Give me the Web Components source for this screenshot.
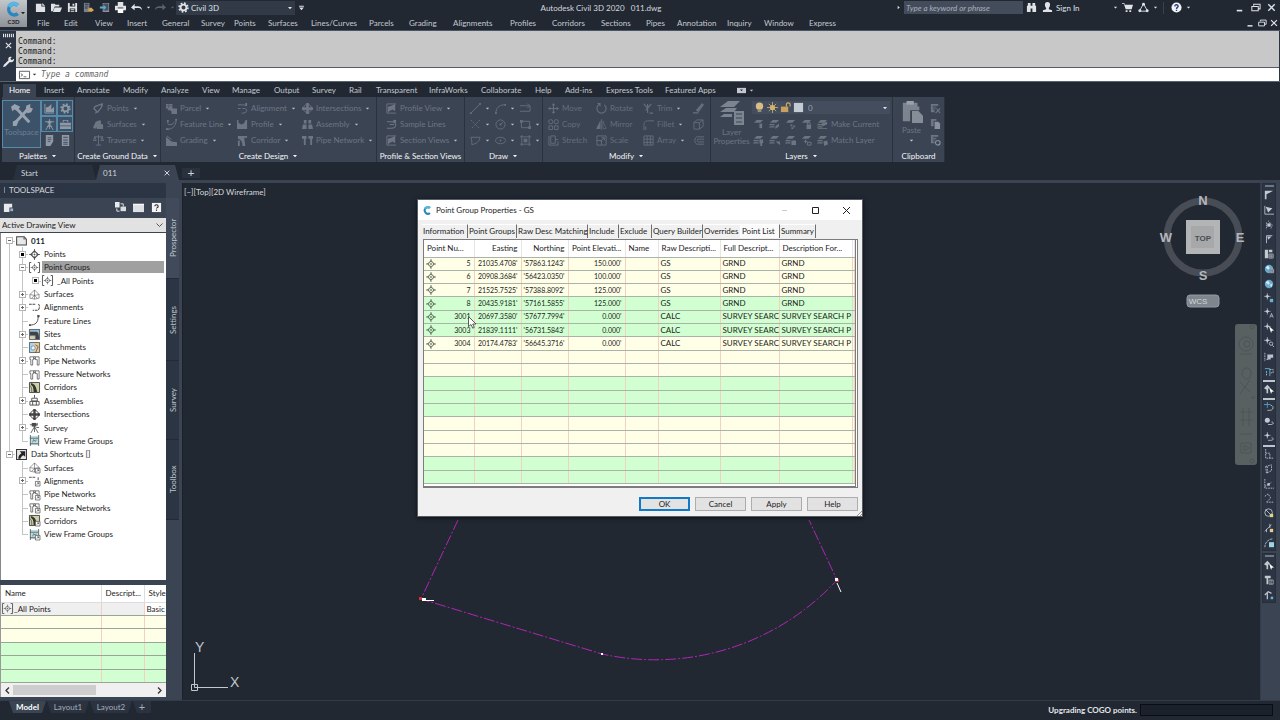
<!DOCTYPE html>
<html lang="en">
<head>
<meta charset="utf-8">
<title>Autodesk Civil 3D 2020 - 011.dwg</title>
<style>
  :root{
    --dark:#212832; --mid:#2c3543; --panel:#3b4453; --text:#c9ced6; --dim:#6d7583;
    --cream:#ffffe8; --green:#d1ffd1; --ui:Lato,"Open Sans","Noto Sans",sans-serif;
  }
  body{margin:0;height:100vh;display:flex;flex-direction:column;overflow:hidden;
    background:var(--dark);color:var(--text);font:8px/12px var(--ui)}
  cad-workspace{flex:1;min-height:0}
</style>
</head>
<body>
<cad-header></cad-header>
<cad-command></cad-command>
<cad-ribbon></cad-ribbon>
<cad-doctabs></cad-doctabs>
<cad-workspace>
  <cad-toolspace slot="left"></cad-toolspace>
  <cad-canvas></cad-canvas>
  <cad-toolstrip slot="right"></cad-toolstrip>
</cad-workspace>
<cad-status></cad-status>

<script>
const S = (d, w = 1) => `<path d="${d}" fill="none" stroke="currentColor" stroke-width="${w}"/>`;
const F = (d, c = 'currentColor') => `<path d="${d}" fill="${c}"/>`;
const cut = '<path d="M7 7h5v5H7z" fill="#fff" stroke="#555" stroke-width=".8"/><path d="M8.5 10.500l2-2M9 8.500h1.500v1.500" fill="none" stroke="#333" stroke-width=".7"/>';
const pipe = S('M1 2h4v3H4v6H2V5H1zM7 2h4v9H9V5H7z', .8) + S('M5 2h2M5 4h2');
const surf = S('M1 10V6l5-5 5 5v4L6 11zM1 6l5 1 5-1M6 1v10M3 10l3-3 3 3', .6);
const corr = '<path d="M.5.5h11v11H.5z" fill="#cfcfa8" stroke="#444"/>' + F('M2 1c5 1 6 5 7 10H5C5 6 4 4 2 3z', '#33382c') + S('M1 4c2 1 2 4 2 7', .8);
const frame = '<path d="M1 1h10v10H1z" fill="#b9dfe3"/>' + S('M1.500 0v12M10.500 0v12M1 3.500h9M1 9.500h9', .8) + S('M4 8l1-3 2 2 1-2', .7);
const diam = '<path d="M6 2l4 4-4 4-4-4z" fill="none" stroke="currentColor" stroke-width="1.200"/>' + S('M6 0v4M6 8v4M0 6h4M8 6h4M6 5v2M5 6h2', .9);
const star = S('M4 0v8M0 4h8', .7) + F('M4 1.500L5 3l1.500 1L5 5 4 6.500 3 5 1.500 4 3 3z');
const lay = F('M4 1h7L8 4H1z') ;
const layers = lay + F('M1 5.500h5v1.200H0zM1 8h5v1.200H0z');
const globe = '<circle cx="6" cy="6" r="5" fill="#66a9cc"/><path d="M2 4l3-2 2 3-2 2zM7 7l3-1-1 4z" fill="#d7eef8"/>';
const ICONS = {
  logo: '<path d="M9.500 2.500A4.600 4.600 0 1 0 9.500 9.500L7.800 7.800A2.300 2.300 0 1 1 7.800 4.200z" fill="#2a87bd"/><path d="M9.500 2.500L7.800 4.200A2.300 2.300 0 0 0 4 5L2 3.500a4.600 4.600 0 0 1 7.500-1z" fill="#59b6e4"/>',
  new: F('M1 2h6v3h4v6H1z') + F('M8 1l3 3H8z'),
  open: F('M0 10V2h4l1 1h4v2H4L2 10z') + F('M4 6h8l-2 5H2z'),
  save: F('M1 1h10v10H1zM3 1v4h6V1zM3 7v4h6V7z').replace('<path', '<path fill-rule="evenodd"') + F('M4 8h4v1H4zM4 9.700h4v1H4zM6 2h2v2H6z'),
  saveas: F('M1 1h6v10H1z', '#7b828c') + F('M2 2h4v1H2zM2 4h4v1H2zM2 6h3v1H2z', '#2c3543') + F('M6 7l3-1 3 3-3 2-3-1z', '#d7a94b'),
  phone: F('M4 1h7v10H4zM5 2v7h5V2z', '#8b93a0').replace('<path', '<path fill-rule="evenodd"') + F('M5 2h5v7H5z', '#49515e') + F('M1 5h4V3l3 3-3 3V7H1z', '#5fa9da'),
  print: F('M3 0h6v4H3zM0 4h12v5H0z') + F('M3 7h6v5H3z', '#fff') + F('M3 6h6v1H3z', '#333'),
  undo: F('M0 6l4-4v2.500h3c3 0 5 1 5 4.500-1-2-2-2.500-5-2.500H4V9z'),
  redo: F('M12 6L8 2v2.500H5C2 4.500 0 5.500 0 9c1-2 2-2.500 5-2.500h3V9z'),
  gear: '<circle cx="6" cy="6" r="3.200" fill="none" stroke="currentColor" stroke-width="2"/><circle cx="6" cy="6" r="4.800" fill="none" stroke="currentColor" stroke-width="1.800" stroke-dasharray="1.900 1.870"/>',
  down: F('M2 4h8L6 8.500z'), right: F('M4 2v8l5-4z'),
  combo: F('M2 3h8v1.500H2zM2 6h8l-4 4.500z'),
  bino: F('M1 4h1V1h3v3h2V1h3v3h1v7H7V7H5v4H1z'),
  user: F('M6 0c4 0 3 5 1.500 6.500V8L11 9v2H1V9l3.500-1V6.500C3 5 2 0 6 0z'),
  cart: F('M0 1h2.500L3 3h9l-1.500 5H4L2 2H0zM4 9h2v2H4zM8 9h2v2H8z'),
  tri: '<path d="M6 2l4.500 8h-9z" fill="none" stroke="currentColor"/><circle cx="6" cy="2.500" r="1.600" fill="currentColor"/><circle cx="2" cy="9.500" r="1.600" fill="currentColor"/><circle cx="10" cy="9.500" r="1.600" fill="currentColor"/>',
  help: '<circle cx="6" cy="6" r="5.500" fill="#f2f4f8"/><path d="M4.200 4.800c0-2.600 3.800-2.300 3.600-.1C7.700 5.800 6 6 6 7.500M6 8.500v1.400" fill="none" stroke="#23407c" stroke-width="1.500"/>',
  min: F('M3 8.500h6v1.800H3z'),
  restore: S('M4 4V2.500h7v5H9M2 5h7v4.500H2z', 1.100),
  close: S('M2.500 2.500l7 7M9.500 2.500l-7 7', 1.500),
  wrench: F('M12 3L9.500 4.500 8 3l1.500-2C7 0 5 2 6 4.500L1 9.500 0 12l2.500-.5L7.500 6.500C10 7.500 12.500 5.500 12 3z'),
  grip: F('M0 4h1.200v4H0zM2.200 4h1.200v4H2.200zM4.400 4h1.200v4H4.400zM6.600 4h1.200v4H6.600zM8.800 4H10v4H8.800zM11 4h1v4h-1z'),
  cmd: '<path d="M.5 2.500h11v8H.5z" fill="#fff" stroke="#555"/><path d="M2 5l2 1.500L2 8M5 8.500h3" fill="none" stroke="#333" stroke-width=".8"/>',
  tools: S('M2 10.500L9 3M3.500 3L10 10', 1.600) + F('M0 1.500L2 0l3 1.500L3.500 3.800 1.800 3 .7 4z') + F('M8 3.800L8.300 1 10.500 0v2L12 2.500l-1 2L9 5zM1 9.500l2-.8 1 1L3 12H1z'),
  prof1: S('M1 1v10h10') + F('M2 5l3-1 3-3v6l3-3v6H2z'),
  survey: S('M1 3h10M6 0v5M6 5L2 12M6 5l4 7M6 4v7M3 8h6', 1) + F('M4 2h4v3H4z'),
  brief: F('M0 4h12v3H0zM0 8h12v3H0zM3 1h6v2.500H8V2H4v1.500H3z'),
  sheet: F('M2 0h8v7L7 12H2z') + S('M4 3h4M4 5h4M4 7h3', .8).replaceAll('currentColor', '#3b4453'),
  calc: F('M2 0h8v12H2z') + S('M3.500 2.500h5M3.500 5.500h5M3.500 8h5M3.500 10h5', 1).replaceAll('currentColor', '#3b4453'),
  tag: S('M2 4l5-2 3-1-1 4-4 5-4-4z', 1.400) + F('M8 2l3-1-1 3zM3 9l-1 3 3-2z'),
  surfaces: F('M0 9l3-6 5-2 1 3-3 3-4 4zM4 8l4-3 3 1v5H4z'),
  scales: S('M1 2h10M6 0v11M3 11h6M2 2L.5 6h3zM10 2L8.500 6h3z', .9),
  parcel: F('M0 1h7v5h-2v2H2V6H0zM5 6h7v6H6V9H5z') + S('M3 1v5M0 3h7', .5).replaceAll('currentColor', '#3b4453'),
  featureline: S('M2 2v3c0 2 6 2 7-2M3 11c4 0 8-4 8-9', 1) + F('M1 1h2v2H1zM10 0h2v2h-2zM0 10h3v2H0z'),
  grading: F('M0 2l6 5 6 1v4H0z') + S('M1 1l5 4', 1),
  alignment: S('M1 2h6l4 1M1 6h3M6 6h2c4 0 3 5-1 5H5', 1) + F('M9 0h2v3H9z'),
  profile: F('M0 1h1.500v3l3 2 3-1 2-4H11v10H0z'),
  corridor: F('M1 1h10v2H8c0 4 1 6 1 9H6C6 8 5 5 1 4z') + F('M1 6h2v6H1z'),
  inter: '<circle cx="6" cy="6" r="4.500" fill="none" stroke="currentColor"/>' + F('M4.500 0h3v4.500H12v3H7.500V12h-3V7.500H0v-3h4.500z'),
  assembly: F('M2 1h3v4H2zM7 1h3v4H7zM1 6h4v5H0zM7 6h4l1 5H7z'),
  pipe: F('M0 1h5v3H4v7H2V4H0zM7 1h5v3h-1v7H9V4H7z'),
  pview: S('M1 1h10M1 11h10M1 1v10') + F('M2 4l4-1 4-2v8l-3-2-5 3z'),
  sline: S('M1 3h6c5 0 5 7-1 7H1M4 6h5', 1.100) + F('M8 1h3v3H8z'),
  line: S('M1 11L11 1') + F('M0 10h2v2H0zM10 0h2v2h-2z'), arc: S('M1 11C1 6 4 2 10 2') + F('M0 10h2v2H0zM10 1h2v2h-2z'),
  pline: S('M0 3h9M0 9h11M8 1l3 2-3 2M11 3v6'), rays: S('M1 1l10 10M11 1L1 11', 1).replace('/>', ' stroke-dasharray="2 1.500"/>'),
  circle: '<circle cx="6" cy="6" r="5" fill="none" stroke="currentColor"/>' + S('M6 6l3-3') + F('M5 5h2v2H5z'),
  rect: S('M1.500 2.500h9v7h-9z') + F('M0 1h3v3H0zM9 8h3v3H9z'), hatch: S('M2 10.500c0-3 0-5-1-8h10c-1 5-4 7-9 8z'),
  ell: '<ellipse cx="6" cy="6" rx="5.500" ry="3.500" fill="none" stroke="currentColor"/><circle cx="6" cy="6" r="1" fill="currentColor"/>',
  region: S('M2 0v12M10 0v12M0 2h12M0 10h12') + F('M4 4h4v4H4z'),
  move: S('M6 1v10M1 6h10', 1.200) + F('M6 0l2 2.500H4zM6 12l2-2.500H4zM0 6l2.500-2v4zM12 6L9.500 4v4z'),
  rotate: S('M3 2a5 5 0 1 0 6 0', 1.200) + F('M1 0h4v4z'),
  copy: '<circle cx="3" cy="3" r="2.300" fill="none" stroke="currentColor"/><circle cx="9" cy="3" r="2.300" fill="none" stroke="currentColor"/>' + S('M1 7.500h4v4H1zM7 7.500h4v4H7z'),
  mirror: F('M5 1v10H0z') + S('M7.500 2v8.500h3.500zM6 0v12', .7), stretch: S('M1 1v10h10V7M3 1h5v8H3zM8 5h3', 1),
  scale: S('M1 1h10v10H1zM1 6h5v5M5 7l4-4M6 3h3v3'), trim: S('M1 1l4 5M5 1v10M3 8l6-7M7 11h4', 1.300),
  fillet: S('M1 12V7c0-4 2-5 5-5h6M3 12V8'), array: S('M1 1h10v10H1zM1 4.500h10M1 8h10M4.500 1v10M8 1v10'),
  erase: F('M3 8l7-8 2 2-6 8z') + F('M0 10h6v1.500H0z'), explode: S('M1 4h6v7H1zM1 4l3-3h7v7l-4 3M7 4l4-3'), offset: S('M12 2H5C1 2 1 10 5 10h7M12 4.500H6c-2 0-2 3 0 3h6'),
  layerprop: F('M4 0h6L7 3H0zM3 3.500h5.500L7 5.500H0zM2 6.500h4v1.500H0z') + F('M7 5h5v7H7z') + S('M8 6.500h3M8 8.500h3M8 10.500h3', .6).replaceAll('currentColor', '#3b4453'),
  bulb: '<circle cx="6" cy="4.500" r="4" fill="#d9bd86"/><path d="M4 8h4v3H4z" fill="#9c8d6c"/>',
  sun: '<circle cx="6" cy="6" r="2.800" fill="#d9b668"/>' + S('M6 0v12M0 6h12M2 2l8 8M10 2l-8 8', .9).replaceAll('currentColor', '#d0b070'),
  lock: F('M1 5h8v6H1z', '#c9a15c') + S('M7 5V2.500c0-2 4-2 4 0V5', 1.200).replaceAll('currentColor', '#d0b070'),
  swatch: F('M1 1h10v10H1z', '#c3cbd5'),
  l1: lay + F('M7 5h3v5H7z'), l2: layers + F('M7 8l4-3v3l-4 3z'), l3: lay + F('M6 6h2v2H6zM9 7h2v2H9zM7 9h2v2H7z'), l4: lay + F('M6 6h5v5H6z') + S('M7 6V4h3v2'), l5: layers + F('M5 5l6-2v3L6 8zM1 10h10v1H1z'),
  l6: layers + F('M7 5h4v4H7zM8 9h2v3H8z'), l7: layers + F('M7 7l5 4v-4z'), l8: layers + F('M7 6h5v5H7z'), l9: lay + S('M3 7h4M5 5v4M7 8h4v3H7z'), l10: layers + F('M7 7l4-1 1 4-4 2z'),
  paste: F('M1 1h8v2h1v2H5v6H1z') + F('M3 0h4v2H3z', '#9aa1ab') + F('M6 5.500h3.500L12 8v4H6z', '#858d99'),
  c1: F('M1 1h8v2H3v1h4v1H3v1h3v1H3v1h2v2H1z') + S('M6 11l5-5M7 6l4 5', 1.200), c2: F('M1 0h6v2H4v6H1z') + F('M5 3h4l2 2v6H5z', '#8a919d'), c3: F('M1 0h8v2H3v1h4v1H3v1h3v1H3v1h2v2H1z') + '<circle cx="8.500" cy="8.500" r="2.500" fill="none" stroke="#8a919d" stroke-width="1.200"/>',
  panelist: F('M0 2.500h12v7H0z') + F('M4 4.500h4L6 7z', '#212832'),
  doc: '<path d="M.7 2h6.600v0H9l2.300 2.500V11H.7z" fill="#e8e8e8" stroke="#444" stroke-width="1.100"/><path d="M8 2l3 3H8z" fill="#777"/>',
  pt: diam, ptgrp: S('M2.500.5H.5v11h2M9.500.5h2v11h-2', 1) + `<g transform="translate(1.800 1.800) scale(.7)">${diam}</g>`,
  tsurf: surf, talign: S('M0 2.500h7M10 2.500c2 0 2 6-1 6.500H4', 1.100).replace('/>', ' stroke-dasharray="3 .8"/>'), tfl: S('M1 11c6 0 9-3 9-9') + F('M9 0h2.500v2.500H9zM0 10h2v2H0z'),
  tsite: '<path d="M0 0h12v12H0z" fill="#8fbde0"/>' + F('M1 3h6c3 0 4 2 4 8H7V7H1z', '#45413c') + F('M0 8h6v4H0z', '#d9cda8') + S('M.5.5h11v11H.5z', .8),
  tcatch: '<path d="M0 0h12v12H0z" fill="#e8c79b"/><path d="M0 0h6l-2 5 2 3-3 4H0z" fill="#a9d5ec"/><circle cx="4.500" cy="6.500" r="2.300" fill="#e8f5fb" stroke="#3d7fa3" stroke-width=".7"/>' + S('M7 3l3 2-3 7M.5.5h11v11H.5z', .8),
  tpipe: pipe, tcorr: corr, tasm: S('M6 0v3M3 3.500h6v3H3zM1 7h10v4H1zM4 7v4M8 7v4', 1), tinter: '<circle cx="6" cy="6" r="4.500" fill="none" stroke="#333"/>' + F('M4.700 0h2.600v4.700H12v2.600H7.300V12H4.700V7.300H0V4.700h4.700z', '#444'),
  tsurvey: S('M1 3h8M9 1v3M6 5L2 12M6 5l4 7M6 4v7M8 6h3', .9) + F('M3 1h5v4H3z'), tframe: frame,
  tshort: '<path d="M.6.6h10.800v10.800H.6z" fill="#e6e6e6" stroke="#333" stroke-width="1.100"/>' + F('M4 2.500h6v6L8 6.700C6 8 5 9 5 10.500H2.500C2.500 7.500 4 6 6 4.700z', '#222'),
  ssurf: surf + cut, salign: S('M0 2.500h7M10 2.500v3').replace('/>', ' stroke-dasharray="3 .8"/>') + cut, spipe: pipe + cut, scorr: corr + cut, sframe: frame + cut,
  tb1: F('M1 2h9v4H7v5H1z') + F('M8 7h3v3H8z', '#9fb6cc'), tb2: F('M0 0h5v6H0z') + F('M6 5h6v5H6z', '#d9dde2') + S('M6 2h3v3M2 7v3h3'), tb3: F('M0 2h12v9H0z', '#dcdfe4') + F('M0 2h12v1.500H0z', '#f6f6f6'), tb4: F('M1 1h10v10H1z', '#f4f4f4') + S('M4.200 4.500c0-2 3.600-2 3.600 0S6 5.800 6 7.200M6 8.300v1.200', 1.200).replaceAll('currentColor', '#222'),
  r1: F('M1 1h10L3 5v6H1z'), r2: S('M1 1v10h11') + F('M2 2l8 2-5 5z'), r3: S('M5 1l5 5-2 5M3 3v8', 1).replace('/>', ' stroke-dasharray="1.500 1"/>') + F('M4 4h4v4H4z'), r4: S('M3 11V2h7', 1) + F('M4 3h5L5 7z'),
  r5: F('M1 1h4v10H1zM6 1h4v3H6z') + S('M6 6h5v5H6zM8.500 6v5M6 8.500h5', .8), r6: globe + F('M7 6h5v6H7z', '#2c3543') + S('M7.500 6.500h4v4h-4zM9.500 6.500v4M7.500 8.500h4', .8), r7: globe + S('M2 7l4-4M5 9l4-4', .8),
  r8: star + F('M7 7h4v4H7z', '#67b0d6'), r9: star + S('M7 11.500l2-5 2 5M7.800 9.800h2.400', .9), r10: star + F('M6 4l6 5-2.500.3L8.500 12z', '#fff'), r11: star + '<circle cx="8.500" cy="8" r="2" fill="none" stroke="currentColor"/>' + S('M10 10l2 2'),
  r12: S('M1 1v10M3 9h3', 1).replace('/>', ' stroke-dasharray="2 1"/>') + F('M4 3h7v4H8v2H4z', '#b9c2cc'), r13: S('M1 2h6v9', 1.200).replaceAll('currentColor', '#5aa5d2') + S('M7 3h4v4H8M3 5v5', 1).replace('/>', ' stroke-dasharray="2 1"/>'),
  r14: F('M0 5l4-4 3 3-2 2v5H3V7z') + F('M6 4l6 5-2.500.3L8.500 12z', '#fff'), r15: S('M0 3h8M4 0v7', 1).replaceAll('currentColor', '#5aa5d2') + S('M8 4c4 0 4 6-1 6H4', 1),
  r16: '<circle cx="4" cy="4" r="3" fill="currentColor"/>' + S('M5 9h3c4 0 4-3 1-3', 1.100), r17: star + S('M5 10h3c4 0 4-3 1-3', 1), r18: S('M2 0v11h10M2 5h5v6', 1).replace('/>', ' stroke-dasharray="2 1"/>'),
  r19: S('M2 3l7-2v7l-6 3zM4 3v8', 1).replace('/>', ' stroke-dasharray="2 1"/>'), r20: S('M1 0v11h11M1 9l8-5', 1).replace('/>', ' stroke-dasharray="2 1"/>') + F('M4 5h3v3H4z'), r21: S('M1 4l4-3 3 5-5 5h9', 1).replace('/>', ' stroke-dasharray="2 1"/>'),
  r22: '<circle cx="5.500" cy="5.500" r="4.500" fill="none" stroke="currentColor"/>' + S('M2 2l7 7') + F('M7 7h4v4H7z', '#e2d38d'), r23: S('M1 10l8-8M7 1v5M3 7v4') + F('M7 7h4v4H7z', '#e2c98d'), r24: S('M1 11C1 6 4 2 10 1', 1).replace('/>', ' stroke-dasharray="3 1"/>') + F('M6 5h6v6H6z', '#9cd3e6'),
  r25: F('M1 1h7v3H1zM3 4h2v7H3z') + S('M6 6h5v5H6zM8.500 6v5', .8), r26: S('M1 6l4-4 4 2M4 4v7', 1.500) + F('M8 8h3v3H8z', '#67b0d6')
};

/* Base: each element gets an open shadow root from its css() and html(). */
class CadElement extends HTMLElement {
  connectedCallback() {
    if (this.shadowRoot) return;
    const t = document.createElement('template');
    t.innerHTML = `<style>:host{box-sizing:border-box;display:block}*,*::before,*::after{box-sizing:border-box}
      button,input,select{font:inherit;color:inherit;background:none;border:0;padding:0;margin:0;text-align:left;white-space:nowrap;border-radius:0}
      select{appearance:none}ul{list-style:none;margin:0;padding:0}${this.css()}</style>${this.html()}`;
    this.attachShadow({ mode: 'open' }).append(t.content.cloneNode(true));
  }
  css() { return ''; }
  html() { return '<slot></slot>'; }
}
const ic = (n, s = '', label = '') => `<cad-icon name="${n}" ${s ? `class="${s}"` : ''} ${label ? `role="img" aria-label="${label}"` : 'aria-hidden="true"'}></cad-icon>`;
const ib = (n, label, s = '') => `<button ${s ? `class="${s}"` : ''} aria-label="${label}">${ic(n)}</button>`;

customElements.define('cad-icon', class extends CadElement {
  css() { return ':host{display:inline-block;flex:none;width:var(--s,11px);height:var(--s,11px)}svg{display:block;width:100%;height:100%;overflow:visible}'; }
  html() { return `<svg viewBox="0 0 12 12">${ICONS[this.getAttribute('name')] || ''}</svg>`; }
});

customElements.define('cad-header', class extends CadElement {
  css() { return `
    :host{display:grid;grid-template-columns:32px 1fr;height:31px;background:var(--dark);border-bottom:1px solid #4a5566}
    .app{width:27px;height:27px;background:linear-gradient(#c3c6ca,#8d9299);display:grid;grid-template-rows:18px 9px;justify-items:center;position:relative}
    .app cad-icon{--s:19px}.app b{font:bold 6px/8px var(--ui);color:#222}
    .app .d{--s:6px;position:absolute;right:1px;top:10px;color:#222}
    .bar{display:grid;grid-template-columns:auto 1fr auto;height:15px;align-items:center;padding-right:1px}
    .l,.r,.win{display:flex;align-items:center}
    button{display:flex;width:16px;height:14px;align-items:center;justify-content:center;color:#dfe2e6}
    .a{width:8px;--s:5px}.faded{color:#59616d}
    .ws{display:flex;align-items:center;width:119px;height:14px;background:#323a48;padding:0 2px;color:#dfe3e8}
    .ws select{flex:1;margin-left:2px;line-height:12px}.ws .d{--s:6px}
    .l .c{--s:7px;margin-left:2px}
    h1{font:8px/14px var(--ui);margin:0;text-align:center;white-space:pre;color:#d5d9de;padding-left:3px}
    input{width:119px;height:13px;background:#434c5b;font-style:italic;padding:0 2px;margin-left:2px}
    input::placeholder{color:#aab1bb;opacity:1}
    .sign{width:56px;color:#dfe2e6;justify-content:flex-start;padding-left:1px}.sep{width:1px;height:12px;background:#39414e;margin:0 4px}
    .gap{margin-left:39px}
    nav{display:flex;height:15px;padding-top:1px;justify-content:space-between}
    nav ul{display:grid;grid-template-columns:27px 31px 32px 35px 39px 33px 34px 43px 58px 40px 44px 57px 42px 49px 45px 31px 50px 37px 45px 40px;padding-left:5px}
    nav li button{width:auto;justify-content:flex-start;color:#c3c8d0;line-height:14px}
    .win button{width:12px;--s:10px}`; }
  html() {
    const menus = 'File Edit View Insert General Survey Points Surfaces Lines/Curves Parcels Grading Alignments Profiles Corridors Sections Pipes Annotation Inquiry Window Express'.split(' ');
    return `<div class="app">${ic('logo')}<b>C3D</b>${ic('down', 'd')}</div>
    <div><div class="bar"><div class="l">${ib('new', 'New')}${ib('open', 'Open')}${ib('save', 'Save')}${ib('saveas', 'Save as')}${ib('phone', 'Web and mobile')}${ib('print', 'Plot')}${ib('undo', 'Undo')}${ib('down', 'Undo list', 'a')}${ib('redo', 'Redo', 'faded')}${ib('down', 'Redo list', 'a faded')}
      <label class="ws">${ic('gear')}<select aria-label="Workspace"><option>Civil 3D</option></select>${ic('down', 'd')}</label>${ib('combo', 'Customize', 'a c')}</div>
      <h1>Autodesk Civil 3D 2020   011.dwg</h1>
      <div class="r">${ib('right', 'Search options', 'a')}<input type="search" aria-label="Search help" placeholder="Type a keyword or phrase">${ib('bino', 'Search')}${ib('user', 'Account')}<button class="sign">Sign In</button>${ib('down', 'Account list', 'a')}${ib('cart', 'App store')}${ib('tri', 'Autodesk app')}${ib('down', 'App list', 'a')}<span class="sep"></span>${ib('help', 'Help')}${ib('down', 'Help list', 'a')}${ib('min', 'Minimize', 'gap')}${ib('restore', 'Restore')}${ib('close', 'Close')}</div></div>
    <nav><ul>${menus.map(m => `<li><button>${m}</button></li>`).join('')}</ul><div class="win">${ib('min', 'Minimize drawing')}${ib('restore', 'Restore drawing')}${ib('close', 'Close drawing')}</div></nav></div>`;
  }
});

customElements.define('cad-command', class extends CadElement {
  css() { return `
    :host{display:grid;grid-template-columns:16px 1fr;height:51px;background:var(--mid);border-bottom:1px solid #5a6370;padding-right:1px}
    .g{display:grid;grid-template-rows:9px 10px 22px;place-items:center;align-content:start;color:#e6e8ea}
    .g .x{--s:9px}
    .log{background:#c8c8c8;height:37px;padding:6px 2px 0;color:#222;font:8px/10px "DejaVu Sans Mono","Liberation Mono",monospace;border-bottom:1px solid #555b63}
    .log p{margin:0}
    label{display:flex;align-items:center;background:#fff;height:13px;padding-left:3px;color:#333}
    .d{--s:5px;margin:0 2px}
    input{flex:1;font:italic 8px/12px "DejaVu Sans Mono","Liberation Mono",monospace;margin-left:2px}
    input::placeholder{color:#666;opacity:1}`; }
  html() { return `<div class="g">${ic('grip')}${ic('close', 'x')}${ic('wrench')}</div><div><div class="log"><p>Command:</p><p>Command:</p><p>Command:</p></div>
    <label>${ic('cmd')}${ic('down', 'd')}<input aria-label="Command" placeholder="Type a command"></label></div>`; }
});

/* A ribbon command: icon, slotted label, optional drop-down arrow. */
customElements.define('rb-cmd', class extends CadElement {
  css() { return `:host{height:16px;color:var(--dim)}button{display:flex;align-items:center;height:16px}.t{padding-left:3px}.d{--s:5px;margin-left:4px;color:#b9bec6}`; }
  html() { return `<button aria-label="${this.textContent || this.getAttribute('icon')}">${ic(this.getAttribute('icon'))}${this.textContent ? '<span class="t"><slot></slot></span>' : ''}${this.hasAttribute('menu') ? ic('down', 'd') : ''}</button>`; }
});
customElements.define('rb-panel', class extends CadElement {
  css() { return `:host{display:grid;grid-template-rows:52px 13px;background:var(--panel);border-right:1px solid #2a323f;height:65px}
    .b{padding-top:3px;min-width:0}h2{font:8px/12px var(--ui);margin:0;color:#f4f5f7;display:flex;justify-content:center;align-items:center;gap:4px;white-space:nowrap;--s:6px}`; }
  html() { return `<div class="b"><slot></slot></div><h2>${this.getAttribute('label')}${this.hasAttribute('menu') ? ic('down') : ''}</h2>`; }
});
const cmd = (i, t = '', m = '') => `<rb-cmd icon="${i}" ${m ? 'menu' : ''}>${t}</rb-cmd>`;
customElements.define('cad-ribbon', class extends CadElement {
  css() { return `
    :host{padding-top:2px;height:83px}
    .tabs{display:grid;grid-template-columns:35px 33px 46px 38px 41px 30px 42px 38px 37px 27px 53px 52px 54px 30px 41px 59px 72px 20px;padding-left:3px;height:13px}
    .tabs button{display:flex;align-items:center;gap:3px;line-height:13px;height:13px;padding-left:6px;color:#c3c8d0}
    .tabs button[aria-selected=true]{background:var(--panel);color:#fff;width:33px}
    .tabs .d{--s:5px}.tabs .w{--s:9px}
    .p{display:flex;margin-left:2px}
    rb-panel{flex:none}
    .pal{width:73px}.gd{width:86px}.de{width:216px}.pr{width:88px}.dr{width:78px}.mo{width:168px}.la{width:182px}.cl{width:52px}
    .dr,.mo{--dim:#666e7b}
    .pg{display:grid;grid-template-columns:39px 16px 16px;grid-template-rows:repeat(3,16px)}
    .pg button{display:grid;place-items:center;color:#8f99a6}
    .pg .on{background:#3b5269;border:1px solid #568aa8}
    .pg .big{grid-row:1/4;align-content:start;padding-top:3px;gap:2px;color:#98a2af;--s:22px}
    .pg .big span{color:#6f7e8f}
    .col{display:grid;grid-auto-flow:column;grid-template-rows:repeat(3,16px);justify-content:start}
    .gd .col{padding-left:18px}.de .col{padding-left:5px;grid-template-columns:71px 65px 80px}
    .pr .col{padding-left:9px}.dr .col{padding-left:5px;grid-template-columns:25px 25px 25px}
    .mo .col{padding-left:5px;grid-template-columns:48px 47px 50px 14px}
    .lg{display:grid;grid-template-columns:41px 1fr;}
    .big{display:grid;justify-items:center;align-content:start;color:#7c8490;line-height:9px;text-align:center;--s:24px;padding-top:1px;gap:3px}
    .big span{color:var(--dim)}
    .sel{display:flex;align-items:center;height:13px;background:#434d5e;gap:2px;padding-left:2px;width:138px;margin-bottom:2px;margin-top:1px}
    .sel select{flex:1;padding-left:2px;color:#9aa2ad}.sel .d{--s:6px;margin-right:2px;color:#dfe3e8}
    .row{display:grid;grid-template-columns:repeat(5,16px);padding-left:1px}
    .cg{display:grid;grid-template-columns:37px 14px}.cl .big{--s:22px}.cl .big .d{--s:5px;color:#c9ced6}`; }
  html() {
    const tabs = ['Home', 'Insert', 'Annotate', 'Modify', 'Analyze', 'View', 'Manage', 'Output', 'Survey', 'Rail', 'Transparent', 'InfraWorks', 'Collaborate', 'Help', 'Add-ins', 'Express Tools', 'Featured Apps'];
    return `<div class="tabs" role="tablist">${tabs.map((t, i) => `<button role="tab" aria-selected="${!i}">${t}</button>`).join('')}<button aria-label="Ribbon display">${ic('panelist', 'w')}${ic('down', 'd')}</button></div>
    <div class="p">
    <rb-panel class="pal" label="Palettes" menu><div class="pg"><button class="big on">${ic('tools')}<span>Toolspace</span></button>${ib('prof1', 'Prospector', 'on')}${ib('gear', 'Settings', 'on')}${ib('survey', 'Survey', 'on')}${ib('brief', 'Toolbox', 'on')}${ib('sheet', 'Panorama')}${ib('calc', 'Properties')}</div></rb-panel>
    <rb-panel class="gd" label="Create Ground Data" menu><div class="col">${cmd('tag', 'Points', 1)}${cmd('surfaces', 'Surfaces', 1)}${cmd('scales', 'Traverse', 1)}</div></rb-panel>
    <rb-panel class="de" label="Create Design" menu><div class="col">${cmd('parcel', 'Parcel', 1)}${cmd('featureline', 'Feature Line', 1)}${cmd('grading', 'Grading', 1)}${cmd('alignment', 'Alignment', 1)}${cmd('profile', 'Profile', 1)}${cmd('corridor', 'Corridor', 1)}${cmd('inter', 'Intersections', 1)}${cmd('assembly', 'Assembly', 1)}${cmd('pipe', 'Pipe Network', 1)}</div></rb-panel>
    <rb-panel class="pr" label="Profile &amp; Section Views"><div class="col">${cmd('pview', 'Profile View', 1)}${cmd('sline', 'Sample Lines')}${cmd('pview', 'Section Views', 1)}</div></rb-panel>
    <rb-panel class="dr" label="Draw" menu><div class="col">${cmd('line', '', 1)}${cmd('rays', '', 1)}${cmd('hatch', '', 1)}${cmd('arc', '', 1)}${cmd('circle', '', 1)}${cmd('ell', '', 1)}${cmd('pline')}${cmd('rect', '', 1)}${cmd('region', '', 1)}</div></rb-panel>
    <rb-panel class="mo" label="Modify" menu><div class="col">${cmd('move', 'Move')}${cmd('copy', 'Copy')}${cmd('stretch', 'Stretch')}${cmd('rotate', 'Rotate')}${cmd('mirror', 'Mirror')}${cmd('scale', 'Scale')}${cmd('trim', 'Trim', 1)}${cmd('fillet', 'Fillet', 1)}${cmd('array', 'Array', 1)}${cmd('erase')}${cmd('explode')}${cmd('offset')}</div></rb-panel>
    <rb-panel class="la" label="Layers" menu><div class="lg"><button class="big">${ic('layerprop')}<span>Layer<br>Properties</span></button><div><label class="sel">${ic('bulb')}${ic('sun')}${ic('lock')}${ic('swatch')}<select aria-label="Layer"><option>0</option></select>${ic('down', 'd')}</label>
      <div class="row">${cmd('l1')}${cmd('l2')}${cmd('l3')}${cmd('l4')}${cmd('l5', 'Make Current')}</div><div class="row">${cmd('l6')}${cmd('l7')}${cmd('l8')}${cmd('l9')}${cmd('l10', 'Match Layer')}</div></div></div></rb-panel>
    <rb-panel class="cl" label="Clipboard"><div class="cg"><button class="big">${ic('paste')}<span>Paste</span>${ic('down', 'd')}</button><div>${cmd('c1')}${cmd('c2')}${cmd('c3')}</div></div></rb-panel></div>`;
  }
});

customElements.define('cad-doctabs', class extends CadElement {
  css() { return `:host{display:flex;height:18px;border-bottom:3px solid var(--panel);padding-left:13px;align-items:flex-end}
    button{height:15px;display:flex;align-items:center;color:#cfd4da}
    .t{width:83px;background:#29313e;padding-left:8px;clip-path:polygon(4px 0,79px 0,100% 100%,0 100%)}
    .on{background:var(--panel);justify-content:space-between;padding:0 8px 0 7px}.on cad-icon{--s:8px}
    .n{width:18px;justify-content:center;font-size:12px;background:#29313e;height:10px;margin:0 0 2px 3px}`; }
  html() { return `<button class="t">Start</button><button class="t on"><span>011</span>${ic('close')}</button><button class="n" aria-label="New drawing">+</button>`; }
});

customElements.define('cad-workspace', class extends CadElement {
  css() { return `:host{display:grid;grid-template-columns:auto 1fr auto}::slotted(*){min-height:0;min-width:0}`; }
  html() { return '<slot name="left"></slot><slot></slot><slot name="right"></slot>'; }
});

/* One line of the prospector tree. */
customElements.define('tree-row', class extends CadElement {
  css() { return `:host{display:flex;align-items:center;padding-left:calc(2px + 13px*var(--lv,0));color:#1c1c1c;white-space:nowrap;position:relative;min-height:0}
    .e{flex:none;width:12px;height:100%;display:grid;place-items:center;position:relative}
    .e::before{content:"";position:absolute;left:6px;right:0;top:50%;border-top:1px solid #c4c4c4}
    :host([rail]) .e::after{content:"";position:absolute;left:6px;top:0;bottom:0;border-left:1px solid #c4c4c4}
    :host([rail=end]) .e::after{bottom:50%}:host([rail=start]) .e::after{top:50%}
    :host([root])::before{content:"";position:absolute;left:8px;top:0;bottom:0;border-left:1px solid #c4c4c4}
    :host([lv="2"]) .u{position:absolute;left:21px;top:0;bottom:0;border-left:1px solid #c4c4c4}
    i{position:relative;z-index:1;width:7px;height:7px;background:#fff;border:1px solid #b5b5b5;display:block}
    i::before{content:"";position:absolute;left:1px;right:1px;top:2px;height:1px;background:#666}
    i.p::after{content:"";position:absolute;top:1px;bottom:1px;left:2px;width:1px;background:#666}
    i.s::before{top:1px;height:3px;background:#000}
    cad-icon{margin-left:1px;color:#4b4b4b}
    .t{flex:1;margin-left:2px;padding-left:2px;line-height:12px;margin-right:1px}
    :host([sel]) .t{background:#a0a0a0}:host([bold]) .t{font-weight:bold}`; }
  html() { const x = this.getAttribute('exp'); return `<span class="u"></span><span class="e">${x ? `<i class="${x}"></i>` : ''}</span>${ic(this.getAttribute('icon'))}<span class="t"><slot></slot></span>`; }
});
customElements.define('cad-toolspace', class extends CadElement {
  css() { return `:host{display:grid;grid-template-columns:166px 16px;background:var(--panel);padding-bottom:3px}
    .main{display:grid;grid-template-rows:15px 20px 15px 1fr 112px;min-height:0}
    h2{margin:0;font:8px/12px var(--ui);background:var(--mid);padding:0 0 2px 4px;color:#d5d9de;display:flex;gap:4px;align-items:center}
    h2::before{content:"";width:1px;height:6px;background:#7e8795}
    .tb{display:flex;align-items:center;padding:0 4px 2px 3px;gap:7px;color:#e8eaee}.tb button{display:flex}.tb .f{margin-right:auto}
    .view{display:flex;align-items:center;background:#e2e2e2;color:#222;height:14px;padding:0 3px 0 2px}.view select{flex:1}
    .view svg{width:7px;height:5px}
    .tree{background:#fff;margin-bottom:5px;padding:1px 1px 0 0;border-left:1px solid #888}
    .list{display:grid;grid-auto-rows:1fr;height:307px}
    .grid{background:#fff;border-left:1px solid #999;display:grid;grid-template-rows:1fr 14px;overflow:hidden}
    table{border-collapse:collapse;table-layout:fixed;width:100%;height:98px;color:#222}
    th,td{font-weight:normal;text-align:left;padding:0 0 0 2px;overflow:hidden;white-space:nowrap;border-right:1px solid #f3cfc4;border-bottom:1px solid #9aa59a}
    th{height:17px;padding-left:4px;border-color:#ddd}th:last-child,td:last-child{border-right:0}
    td{background:var(--cream);height:13px}.g td{background:var(--green)}.s td{background:#efefef}.s td:last-child{background:#fff}
    .c{display:flex;align-items:center;gap:1px;color:#555}.c span{color:#222}.c cad-icon{margin-left:-1px}
    .sb{background:#f0f0f0;display:flex;align-items:center;padding:0 3px;color:#333;--s:7px}
    .sb svg{width:7px;height:7px;flex:none}.sb b{background:#cdcdcd;height:10px;width:83px;margin-left:2px}.sb svg:last-child{margin-left:auto}
    .side{display:grid;grid-template-rows:81px 82px 79px 80px;padding-top:15px;align-content:start;width:13px}
    .side button{writing-mode:vertical-rl;transform:rotate(180deg);text-align:center;background:var(--mid);line-height:12px;border:1px solid #222a35;color:#bfc5cd;border-width:1px 0 0}
    .side .on{background:#414a5a}`; }
  html() {
    const rows = [
      [0, 'm', 'doc', '011', 'rail=start bold'], [1, 's', 'pt', 'Points', 'rail root'], [1, 'm', 'ptgrp', 'Point Groups', 'rail root sel'], [2, 's', 'ptgrp', '_All Points', 'root'],
      [1, 'p', 'tsurf', 'Surfaces', 'rail root'], [1, 'p', 'talign', 'Alignments', 'rail root'], [1, '', 'tfl', 'Feature Lines', 'rail root'], [1, 'p', 'tsite', 'Sites', 'rail root'], [1, '', 'tcatch', 'Catchments', 'rail root'], [1, 'p', 'tpipe', 'Pipe Networks', 'rail root'], [1, '', 'tpipe', 'Pressure Networks', 'rail root'], [1, '', 'tcorr', 'Corridors', 'rail root'], [1, 'p', 'tasm', 'Assemblies', 'rail root'], [1, '', 'tinter', 'Intersections', 'rail root'], [1, 'p', 'tsurvey', 'Survey', 'rail root'], [1, '', 'tframe', 'View Frame Groups', 'rail=end root'],
      [0, 'm', 'tshort', 'Data Shortcuts []', 'rail=end'], [1, '', 'ssurf', 'Surfaces', 'rail'], [1, 'p', 'salign', 'Alignments', 'rail'], [1, '', 'spipe', 'Pipe Networks', 'rail'], [1, '', 'spipe', 'Pressure Networks', 'rail'], [1, '', 'scorr', 'Corridors', 'rail'], [1, '', 'sframe', 'View Frame Groups', 'rail=end']];
    const e = c => `<tr class="${c}"><td></td><td></td><td></td></tr>`;
    return `<div class="main"><h2>TOOLSPACE</h2><div class="tb">${ib('tb1', 'Refresh', 'f')}${ib('tb2', 'Tree view')}${ib('tb3', 'Preview')}${ib('tb4', 'Help')}</div>
    <label class="view"><select aria-label="View"><option>Active Drawing View</option></select><svg viewBox="0 0 7 5"><path d="M.5.5l3 3 3-3" fill="none" stroke="#555"/></svg></label>
    <div class="tree"><div class="list" role="tree">${rows.map(r => `<tree-row role="treeitem" lv="${r[0]}" style="--lv:${r[0]}" exp="${r[1]}" icon="${r[2]}" ${r[4]}>${r[3]}</tree-row>`).join('')}</div></div>
    <div class="grid"><table><colgroup><col style="width:100px"><col style="width:43px"><col></colgroup><thead><tr><th>Name</th><th>Descript...</th><th>Style</th></tr></thead><tbody><tr class="s"><td><div class="c">${ic('ptgrp')}<span>_All Points</span></div></td><td></td><td>Basic</td></tr>${e('')}${e('')}${e('g')}${e('g')}${e('g')}</tbody></table>
    <div class="sb"><svg viewBox="0 0 7 7"><path d="M5 .5l-3 3 3 3" fill="none" stroke="#333" stroke-width="1.300"/></svg><b></b><svg viewBox="0 0 7 7"><path d="M2 .5l3 3-3 3" fill="none" stroke="#333" stroke-width="1.300"/></svg></div></div></div>
    <div class="side"><button class="on">Prospector</button><button>Settings</button><button>Survey</button><button>Toolbox</button></div>`;
  }
});

customElements.define('cad-dialog', class extends CadElement {
  css() { return `:host{background:#f0f0f0;color:#1c1c1c;border:1px solid #555c66;display:grid;grid-template-rows:20px 19px 1fr 28px;width:446px;height:318px;box-shadow:0 1px 4px #000a}
    header{background:#fff;display:flex;align-items:center;padding-left:4px}
    header h2{font:8px/14px var(--ui);margin:0 auto 0 3px}header .w{width:31px;text-align:center}header svg{width:9px;height:9px;display:block;margin:auto}
    .tabs{display:grid;grid-template-columns:46px 49px 71px 31px 33px 51px 38px 39px 36px;padding:4px 0 0 4px}
    .tabs button{height:14px;line-height:13px;padding-left:1px;border-right:1px solid #6e6e6e;border-top:1px solid #fff}
    .tabs .on{background:#fafafa}.tabs button:nth-child(7){border-right-color:#fff}
    .f{margin:0 4px 0 5px;border:1px solid #7c7c7c;border-width:1px 3px 2px 1px;border-right-style:double;background:#fff;min-height:0;overflow:hidden}
    table{border-collapse:collapse;table-layout:fixed;width:100%;height:244px}
    th,td{font-weight:normal;padding:0 0 0 2px;white-space:nowrap;overflow:hidden;border-right:1px solid #f0d2c2;text-align:left;border-bottom:1px solid #a9b3a9}
    th{height:17px;padding:0 3px;border-right-color:#e6e6e6}
    td{background:var(--cream);height:13px;line-height:11px}.g td{background:var(--green)}
    .n{text-align:right}td.n{padding-right:3px}td.n,.c span{font-size:7px}
    .c{display:flex;justify-content:space-between;align-items:center;color:#4c5a4c;padding-right:3px}.c span{color:#1c1c1c}.c cad-icon{--s:10px}
    footer{display:flex;justify-content:flex-end;gap:5px;padding:9px 4px 0;position:relative}
    footer button{width:51px;height:14px;background:#e2e2e2;border:1px solid #adadad;text-align:center;line-height:12px}
    footer .ok{border:2px solid #1179c6;line-height:10px}
    .grip{position:absolute;right:0;bottom:0;width:6px;height:6px}`; }
  html() {
    const tabs = ['Information', 'Point Groups', 'Raw Desc Matching', 'Include', 'Exclude', 'Query Builder', 'Overrides', 'Point List', 'Summary'];
    const heads = ['Point Nu...', 'Easting', 'Northing', 'Point Elevati...', 'Name', 'Raw Descripti...', 'Full Descript...', 'Description For...', ''];
    const W = [50, 47, 47, 57, 33, 62, 59, 73];
    const data = [['5', "21035.4708'", "'57863.1243'", "150.000'", '', 'GS', 'GRND', 'GRND'], ['6', "20908.3684'", "'56423.0350'", "100.000'", '', 'GS', 'GRND', 'GRND'], ['7', "21525.7525'", "'57388.8092'", "125.000'", '', 'GS', 'GRND', 'GRND'], ['8', "20435.9181'", "'57161.5855'", "125.000'", '', 'GS', 'GRND', 'GRND'],
      ['3001', "20697.3580'", "'57677.7994'", "0.000'", '', 'CALC', 'SURVEY SEARC', 'SURVEY SEARCH P'], ['3003', "21839.1111'", "'56731.5843'", "0.000'", '', 'CALC', 'SURVEY SEARC', 'SURVEY SEARCH P'], ['3004', "20174.4783'", "'56645.3716'", "0.000'", '', 'CALC', 'SURVEY SEARC', 'SURVEY SEARCH P']];
    const rows = Array.from({ length: 17 }, (_, i) => {
      const d = data[i] || Array(8).fill('');
      return `<tr ${Math.floor(i / 3) % 2 ? 'class="g"' : ''}>${d.map((v, j) => `<td ${j > 0 && j < 4 ? 'class="n"' : ''}>${!j && v ? `<div class="c">${ic('pt')}<span>${v}</span></div>` : v}</td>`).join('')}<td></td></tr>`;
    }).join('');
    return `<header>${ic('logo')}<h2>Point Group Properties - GS</h2><button class="w" aria-label="Minimize"><svg viewBox="0 0 9 9"><path d="M2 4.500h5" stroke="#ccc"/></svg></button><button class="w" aria-label="Maximize"><svg viewBox="0 0 9 9"><path d="M1.500 1.500h6v6h-6z" fill="none" stroke="#222"/></svg></button><button class="w" aria-label="Close"><svg viewBox="0 0 9 9"><path d="M1 1l7 7M8 1L1 8" stroke="#222"/></svg></button></header>
    <div class="tabs" role="tablist">${tabs.map((t, i) => `<button role="tab" ${i === 7 ? 'class="on" aria-selected="true"' : ''}>${t}</button>`).join('')}</div>
    <div class="f"><table><colgroup>${W.map(w => `<col style="width:${w}px">`).join('')}<col></colgroup><thead><tr>${heads.map((h, i) => `<th ${i > 0 && i < 4 ? 'class="n"' : ''}>${h}</th>`).join('')}</tr></thead><tbody>${rows}</tbody></table></div>
    <footer><button class="ok">OK</button><button>Cancel</button><button>Apply</button><button>Help</button><svg class="grip" viewBox="0 0 6 6"><path d="M1 6l5-5M4 6l2-2" stroke="#999"/></svg></footer>`;
  }
});

customElements.define('view-cube', class extends CadElement {
  css() { return `:host{width:90px}svg{display:block;width:90px;height:130px}text{font-family:"Liberation Sans",sans-serif;text-anchor:middle}`; }
  html() { return `<svg viewBox="0 0 90 130"><circle cx="45" cy="46" r="36" fill="none" stroke="#474c55" stroke-width="7"/><g fill="#b3b7bc" font-size="13" font-weight="bold"><text x="45" y="14">N</text><text x="45" y="89">S</text><text x="8" y="51">W</text><text x="82" y="51">E</text></g>
    <path d="M28 29h34v34H28z" fill="#b3b4b5"/><path d="M33 35h23v22H33z" fill="#a7a8a9"/><text x="45" y="50" font-size="8" font-weight="bold" fill="#4a4d52">TOP</text>
    <rect x="29" y="104" width="32" height="12" rx="3" fill="#7f868e" stroke="#9299a1"/><text x="40" y="113" font-size="8" fill="#d3d7db">WCS</text></svg>`; }
});

customElements.define('cad-canvas', class extends CadElement {
  css() { return `:host{position:relative;overflow:hidden;background:var(--dark);border-left:1px solid #1b212a}
    .vp{margin:3px 1px;line-height:12px;color:#d5d9de}
    .draw{position:absolute;left:-1px;top:0;width:1078px;height:517px}
    cad-dialog{position:absolute;left:234px;top:16px}
    view-cube{position:absolute;right:12px;top:8px}
    .nav{position:absolute;right:3px;top:141px;width:22px;height:141px;background:#596061;border-radius:3px}
    .cur{position:absolute;left:285px;top:133px;width:8px;height:13px}
    text{font:14px "Liberation Sans",sans-serif;fill:#c2c7cd}`; }
  html() { return `<div class="vp">[−][Top][2D Wireframe]</div>
    <svg class="draw" viewBox="182 183 1078 517"><g fill="none" stroke="#b026b4" stroke-dasharray="11 2 2 2"><path d="M458 520L421 599 602 654A247 247 0 0 0 837 580L809 520"/></g>
      <path d="M419 597h3v3h-3zM836 579h3v3h-3z" fill="#c33"/><path d="M422 598h4v3h-4zM835 578h3v3h-3zM601 653h2v2h-2z" fill="#fff"/><path d="M425 600.500h9M837 583l4 9" stroke="#fff" fill="none"/>
      <g fill="none" stroke="#c2c7cd"><path d="M194.500 684V653M198 687.500h30M191.500 684.500h6v6h-6zM194.500 687.500h3M194.500 687.500v-3"/></g><text x="195" y="652">Y</text><text x="230" y="687">X</text></svg>
    <view-cube></view-cube>
    <svg class="nav" viewBox="0 0 22 141"><g fill="none" stroke="#4d5455"><circle cx="17" cy="3" r="2"/><circle cx="11" cy="20" r="7"/><circle cx="12" cy="20" r="3"/><path d="M5 30h12M7 50c0-8 10-8 9 0s-8 5-9 0zM5 58l10 10M15 56L5 70M16 72l2 3 2-3M5 88h13M5 96h13M8 84v18M14 84v18M5 110h12M6 119h10v10H6zM9 121v6l5-3z"/><circle cx="17" cy="137" r="2"/></g></svg>
    <cad-dialog role="dialog" aria-label="Point Group Properties - GS"></cad-dialog>
    <svg class="cur" viewBox="0 0 8 13"><path d="M.5.5v10L3 8.500l1.700 3.700 1.600-.8L4.700 8H8z" fill="#fff" stroke="#333" stroke-width=".8"/></svg>`; }
});

customElements.define('cad-toolstrip', class extends CadElement {
  css() { return `:host{width:20px;background:var(--panel);padding:0 4px 0 1px;border-left:1px solid #333c4a}
    .g{background:var(--mid);border:1px solid #262e3a;margin-bottom:2px;display:flex;flex-direction:column;align-items:center;height:368px}
    .b{height:50px}
    .g::before{content:"";width:9px;height:2px;background:#6f7784;margin:1px 0}
    button{width:13px;flex:1;min-height:0;display:grid;place-items:center;color:#c2c8d0;--s:10px}
    hr{width:12px;height:2px;background:#bfc5cd;border:0;margin:1px 0 0}`; }
  html() {
    const b = n => ib('r' + n, 'Tool ' + n);
    return `<div class="g" role="toolbar">${[1, 2, 3, 4, 5, 6, 7, 8, 9, 10, 11, 12, 13].map(b).join('')}<hr>${b(14)}<hr>${[15, 16, 17].map(b).join('')}<hr>${[18, 19, 20, 21, 22, 23, 24].map(b).join('')}</div>
    <div class="g b" role="toolbar">${[14, 25, 26].map(b).join('')}</div>`;
  }
});

customElements.define('cad-status', class extends CadElement {
  css() { return `:host{display:flex;justify-content:space-between;height:20px;border-top:1px solid #323b49;align-items:flex-start;padding:0 7px 0 9px}
    ul{display:flex}button{height:12px;text-align:center;width:42px;background:#2b3341;color:#a7aeb8;clip-path:polygon(0 0,100% 0,38px 100%,4px 100%)}
    .on{background:var(--panel);color:#fff;font-weight:bold;width:37px;clip-path:polygon(0 0,100% 0,33px 100%,4px 100%)}.n{width:18px;font-size:11px}
    li{margin-right:1px}
    label{display:flex;align-items:center;gap:3px;color:#e2e5e9;font-weight:bold;padding-top:3px}
    progress{appearance:none;width:133px;height:12px;border:1px solid #0a0d12}
    progress::-webkit-progress-bar{background:#1b212a}`; }
  html() { return `<ul><li><button class="on">Model</button></li><li><button>Layout1</button></li><li><button>Layout2</button></li><li><button class="n" aria-label="New layout">+</button></li></ul>
    <label>Upgrading COGO points.<progress value="0" max="1"></progress></label>`; }
});
</script>
</body>
</html>
